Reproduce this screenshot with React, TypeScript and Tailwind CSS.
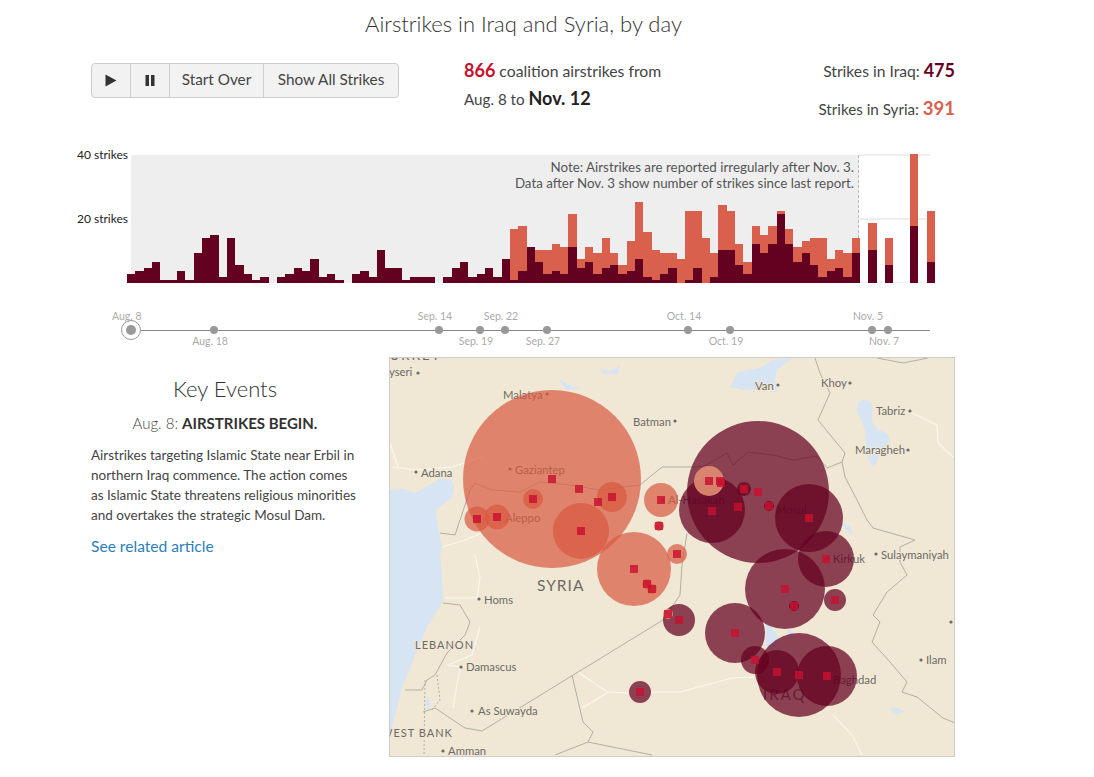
const DIAS = [
  [3,3],[4,4],[5,5],[7,7],[1,1],[1,1],[4,4],[1,1],[10,10],[15,15],[16,16],[2,2],[15,15],[6,6],[3,3],[1,1],[2,2],[0,0],[2,2],[3,3],
  [5,5],[4,4],[8,8],[2,2],[3,3],[1,1],[0,0],[3,3],[4,4],[2,2],[11,11],[5,5],[5,5],[1,1],[2,2],[2,2],[2,2],[0,0],[2,2],[5,5],
  [7,7],[2,2],[3,3],[5,5],[2,2],[8,8],[1,18],[4,19],[12,12],[7,11],[3,11],[4,13],[3,12],[12,23],[5,8],[7,12],[3,10],[5,15],[6,10],[3,6],
  [4,14],[8,27],[2,17],[1,11],[3,10],[5,10],[0,8],[1,24],[5,24],[0,15],[2,10],[11,26],[11,24],[6,13],[3,7],[13,19],[10,16],[13,19],[23,24],[13,18],
  [7,12],[10,14],[6,15],[2,15],[4,8],[5,11],[2,10],[10,15],[0,0],[11,20],[0,0],[6,15],[0,0],[0,0],[19,43],[0,0],[7,24],
]

const FECHAS = [
  { x: 214, label: 'Aug. 18', abajo: true },
  { x: 439, label: 'Sep. 14', abajo: false },
  { x: 480, label: 'Sep. 19', abajo: true },
  { x: 505, label: 'Sep. 22', abajo: false },
  { x: 547, label: 'Sep. 27', abajo: true },
  { x: 688, label: 'Oct. 14', abajo: false },
  { x: 730, label: 'Oct. 19', abajo: true },
  { x: 872, label: 'Nov. 5', abajo: false },
  { x: 888, label: 'Nov. 7', abajo: true },
]

const NARANJA = [[552,479,89],[581,531,28],[612,497,15],[533,499,10],[477,519,12.5],[497,517,12.5],[661,500,17],[659,526,5],[677,554,10],[634,569,37],[647,584,5],[652,589,5]]
const OSCURO = [[758,492,71],[712,510,33],[809,518,34],[826,559,28],[785,589,40],[835,600,11],[679,620,16],[735,633,30],[755,660,14],[799,675,42],[777,672,22],[827,676,30],[640,692,11],[721,483,5],[744,489,7],[769,506,5],[794,606,5],[738,507,4]]
const CUADROS = [[552,479],[579,489],[598,502],[612,497],[533,499],[477,519],[497,517],[581,531],[661,500],[659,526],[677,554],[634,569],[647,584],[652,589],[668,614],[679,620],[709,481],[720,481],[721,483],[744,489],[758,492],[712,511],[738,507],[769,506],[794,606],[809,518],[826,559],[785,589],[835,600],[735,633],[755,660],[777,672],[799,675],[827,676],[640,692]]

const CIUDADES: [string, number, number, number | null, number | null][] = [
  ['Kayseri', 376, 376, 418, 373],
  ['Malatya', 503, 399, 547, 394],
  ['Batman', 633, 426, 675, 421],
  ['Gaziantep', 515, 474, 510, 469],
  ['Adana', 421, 477, 416, 472],
  ['Aleppo', 505, 522, null, null],
  ['Al-Hasakah', 668, 504, 663, 500],
  ['Mosul', 776, 514, null, null],
  ['Kirkuk', 833, 563, 828, 558],
  ['Van', 755, 390, 778, 385],
  ['Khoy', 821, 387, 850, 383],
  ['Tabriz', 876, 415, 910, 411],
  ['Maragheh', 855, 454, 908, 450],
  ['Sulaymaniyah', 881, 559, 876, 554],
  ['Homs', 484, 604, 479, 599],
  ['Damascus', 466, 671, 461, 667],
  ['As Suwayda', 478, 715, 472, 711],
  ['Amman', 448, 755, 443, 751],
  ['Ilam', 926, 664, 921, 660],
  ['Baghdad', 833, 684, null, null],
]

function Mapa() {
  return (
    <svg viewBox="390 358 564 398" width="564" height="398" className="block">
      <rect x="390" y="358" width="564" height="398" fill="#f0e8d5" />
      {/* mar y lagos */}
      <g fill="#d6e4f3">
        <path d="M390 490 L404 489 L415 493 L428 486 L442 478 L451 480 L454 486 L452 497 L436 510 L438 527 L442 547 L440 555 L442 575 L443 602 L428 625 L415 655 L402 688 L395 715 L390 735 Z" />
        <path d="M730 387 L738 372 L760 368 L773 360 L792 358 L777 370 L775 380 L777 392 L760 390 L745 390 Z" />
        <path d="M858 402 C864 398 872 400 873 408 C870 418 872 424 878 430 C888 432 892 438 888 444 C880 448 880 458 874 467 C868 462 866 452 866 442 C866 430 862 420 857 412 Z" />
        <path d="M766 622 C772 628 778 634 780 640 L772 650 L766 646 Z" />
        <path d="M788 628 L794 634 L792 640 L787 636 Z" />
        <path d="M890 708 C896 707 902 709 904 712 C898 715 892 714 890 708 Z" />
        <path d="M841 522 L850 526 L853 535 L846 530 Z" />
        <path d="M428 697 L431 704 L428 710 L425 704 Z" />
        <path d="M558 378 C565 384 572 386 580 388 L566 390 Z" />
        <path d="M600 368 C612 372 612 372 620 365 L618 374 L604 374 Z" />
      </g>
      {/* carreteras */}
      <g fill="none" stroke="#fbf8f0" strokeWidth="1.1">
        <path d="M475 555 L480 578 L477 598 L445 598" />
        <path d="M480 627 L472 655 L448 665 L460 667 L453 708" />
        <path d="M578 672 L607 692 L628 693 L660 692 L680 692 L732 678 L755 677" />
        <path d="M607 693 L582 708" />
        <path d="M833 715 L852 735 L862 755" />
        <path d="M910 412 L937 425 L938 443 L953 457" />
        <path d="M392 467 L415 470 L452 467 L482 457" />
        <path d="M390 443 L398 467" />
        <path d="M442 547 L465 540 L482 533" />
      </g>
      {/* fronteras */}
      <g fill="none" stroke="#b3afa5" strokeWidth="1">
        <path d="M440 533 L455 535 L460 520 L470 490 L475 483 L492 490 L520 492 L540 482 L570 485 L600 490 L640 485 L662 467 L687 467 L703 467 L727 453 L733 465 L748 452 L773 455 L793 460 L817 456 L827 468 L842 462 L845 477 L857 500 L867 520 L873 528 L915 540 L900 547 L900 562 L907 575 L887 592 L873 615 L880 622 L872 642 L890 662 L907 682 L902 692 L917 697 L943 718 L955 723" />
        <path d="M842 462 L845 453 L818 420 L830 393 L820 373 L815 358" />
        <path d="M877 358 L903 363 L928 358" />
        <path d="M687 533 L682 565 L680 595 L663 620 L482 731 L465 728 L435 708 L423 712" />
        <path d="M572 675 L583 722 L593 732 L588 742 L555 755" />
        <path d="M588 742 L652 755" />
        <path d="M443 603 L460 605 L470 622 L465 635 L447 653 L442 662 L435 675 L427 680 L422 690 L405 690" />
        <path d="M425 680 L424 756" strokeDasharray="2 2" />
        <path d="M437 675 L440 700 L432 710" strokeDasharray="2 2" />
      </g>
      <g fontFamily="Lato, sans-serif" fill="#6c6a66" fontSize="11.3" stroke="#f0e8d5" strokeWidth="2" paintOrder="stroke">
        <text x="380" y="360" fontSize="13" letterSpacing="2">TURKEY</text>
        <text x="537" y="591" fontSize="15.5" letterSpacing="1">SYRIA</text>
        <text x="763" y="700" fontSize="15" letterSpacing="2">IRAQ</text>
        <text x="415" y="649" fontSize="11" letterSpacing="1">LEBANON</text>
        <text x="381" y="737" fontSize="11" letterSpacing="1">WEST BANK</text>
        <text x="384" y="764" fontSize="11" letterSpacing="1">ISRAEL</text>
        {CIUDADES.map(([nombre, x, y, px, py]) => (
          <g key={nombre}>
            <text x={x} y={y}>{nombre}</text>
            {px !== null && py !== null && <circle cx={px} cy={py} r="1.6" stroke="none" />}
          </g>
        ))}
        <circle cx="951" cy="622" r="1.6" stroke="none" />
      </g>
      {/* circulos de ataques */}
      <g fill="#d8583f" fillOpacity="0.7">
        {NARANJA.map(([x, y, r], i) => <circle key={i} cx={x} cy={y} r={r} />)}
      </g>
      <g fill="#640020" fillOpacity="0.72">
        {OSCURO.map(([x, y, r], i) => <circle key={i} cx={x} cy={y} r={r} />)}
      </g>
      <circle cx="709" cy="481" r="15" fill="#e08a72" fillOpacity="0.92" />
      <circle cx="668" cy="614" r="5" fill="#e08a72" fillOpacity="0.92" />
      <g fill="#c8102e" fillOpacity="0.82">
        {CUADROS.map(([x, y], i) => <rect key={i} x={x - 4} y={y - 4} width="8" height="8" />)}
      </g>
    </svg>
  )
}

export default function App() {
  return (
    <div className="w-[1094px] h-[777px] overflow-hidden bg-white text-[#444] font-['Lato',sans-serif]">
      <h1 className="w-[1047px] h-[50px] pt-[8px] text-center text-[22px] leading-[32px] font-light text-[#333]">
        Airstrikes in Iraq and Syria, by day
      </h1>

      {/* ── Controles y totales ─────────────────────────────── */}
      <div className="flex h-[90px] pt-[13px] pl-[91px]">
        <div className="flex w-[308px] h-[35px] rounded border border-[#ccc] bg-[#f2f2f2] text-[15.3px] leading-[31px]">
          <div className="flex w-[39px] items-center justify-center border-r border-[#ccc]">
            <svg width="12" height="13" viewBox="0 0 12 13"><path d="M0.5 0.5 L11.5 6.5 L0.5 12.5 Z" fill="#333" /></svg>
          </div>
          <div className="flex w-[39px] items-center justify-center border-r border-[#ccc]">
            <svg width="10" height="11" viewBox="0 0 10 11"><path d="M0.5 0H4V11H0.5ZM6 0H9.5V11H6Z" fill="#333" /></svg>
          </div>
          <div className="w-[94px] text-center border-r border-[#ccc]">Start Over</div>
          <div className="flex-1 text-center">Show All Strikes</div>
        </div>
        <div className="ml-[65px] w-[300px] text-[15.75px] text-[#444]">
          <p className="h-[23px] leading-[15px]"><b className="text-[18px] font-bold text-[#c8102e]">866</b> coalition airstrikes from</p>
          <p className="text-[15.2px] leading-[24px]">Aug. 8 to <b className="text-[18px] font-bold text-[#222]">Nov. 12</b></p>
        </div>
        <div className="w-[191px] text-right text-[15.65px]">
          <p className="h-[38px] leading-[15px]">Strikes in Iraq: <b className="text-[18px] font-bold text-[#640020]">475</b></p>
          <p className="text-[15.2px] leading-[15px]">Strikes in Syria: <b className="text-[18.5px] font-bold text-[#d8604c]">391</b></p>
        </div>
      </div>

      {/* ── Barras por dia ─────────────────────────────────── */}
      <div className="relative ml-[127px] w-[808px] h-[130px] mt-[13px] flex items-end">
        <div className="absolute left-[4px] top-[2px] w-[728px] h-[128px] bg-[#eeeeee] border-r border-dashed border-[#bbb]" />
        <div className="absolute left-[732px] top-[1px] w-[71px] h-[2px] bg-[#eee]" />
        <div className="absolute left-[732px] top-[65px] w-[71px] h-[2px] bg-[#eee]" />
        <div className="absolute left-[732px] bottom-0 w-[71px] h-px bg-[#eee]" />
        <span className="absolute right-full -mr-px top-[-7px] whitespace-nowrap text-[12px] text-[#222]">40 strikes</span>
        <span className="absolute right-full -mr-px top-[57px] whitespace-nowrap text-[12px] text-[#222]">20 strikes</span>
        <p className="absolute right-[81px] top-[6px] text-right text-[13.35px] leading-[16px] text-[#555]">
          Note: Airstrikes are reported irregularly after Nov. 3.<br />
          Data after Nov. 3 show number of strikes since last report.
        </p>
        {DIAS.map(([oscuro, total], i) => (
          <div key={i} className="relative flex-1 flex flex-col justify-end">
            <div className="bg-[#d8604c]" style={{ height: (total - oscuro) * 3 }} />
            <div className="bg-[#640020]" style={{ height: oscuro * 3 }} />
          </div>
        ))}
      </div>

      {/* ── Linea de tiempo ────────────────────────────────── */}
      <div className="relative h-[74px]">
        <div className="absolute left-[131px] top-[47px] w-[799px] h-px bg-[#888]" />
        <div className="absolute left-[121px] top-[37px] w-[20px] h-[20px] rounded-full border-[1.5px] border-[#999] bg-white flex items-center justify-center">
          <div className="w-[10px] h-[10px] rounded-full bg-[#999]" />
        </div>
        <span className="absolute left-[112px] top-[26px] text-[10.5px] leading-[14px] text-[#aaa]">Aug. 8</span>
        {FECHAS.map(f => (
          <div key={f.label}>
            <div className="absolute top-[43px] w-[8px] h-[8px] rounded-full bg-[#999]" style={{ left: f.x - 4 }} />
            <span
              className={`absolute -translate-x-1/2 text-[10.5px] leading-[14px] text-[#aaa] whitespace-nowrap ${f.abajo ? 'top-[51px]' : 'top-[26px]'}`}
              style={{ left: f.x - 4 }}
            >
              {f.label}
            </span>
          </div>
        ))}
      </div>

      {/* ── Eventos y mapa ─────────────────────────────────── */}
      <div className="flex">
        <div className="ml-[91px] w-[268px] mr-[30px] pt-[17px]">
          <h2 className="text-center text-[22px] leading-[30px] font-light text-[#333]">Key Events</h2>
          <p className="mt-[7px] text-center text-[15px] leading-[24px] font-light whitespace-nowrap">
            Aug. 8: <b className="font-bold text-[#333]">AIRSTRIKES BEGIN.</b>
          </p>
          <p className="mt-[10px] text-[13.5px] leading-[20px] text-[#444] whitespace-nowrap">
            Airstrikes targeting Islamic State near Erbil in<br />
            northern Iraq commence. The action comes<br />
            as Islamic State threatens religious minorities<br />
            and overtakes the strategic Mosul Dam.
          </p>
          <p className="mt-[10px] text-[15.6px] leading-[22px] text-[#2a7fba]">See related article</p>
        </div>
        <div className="border border-[#ccc]">
          <Mapa />
        </div>
      </div>
    </div>
  )
}
